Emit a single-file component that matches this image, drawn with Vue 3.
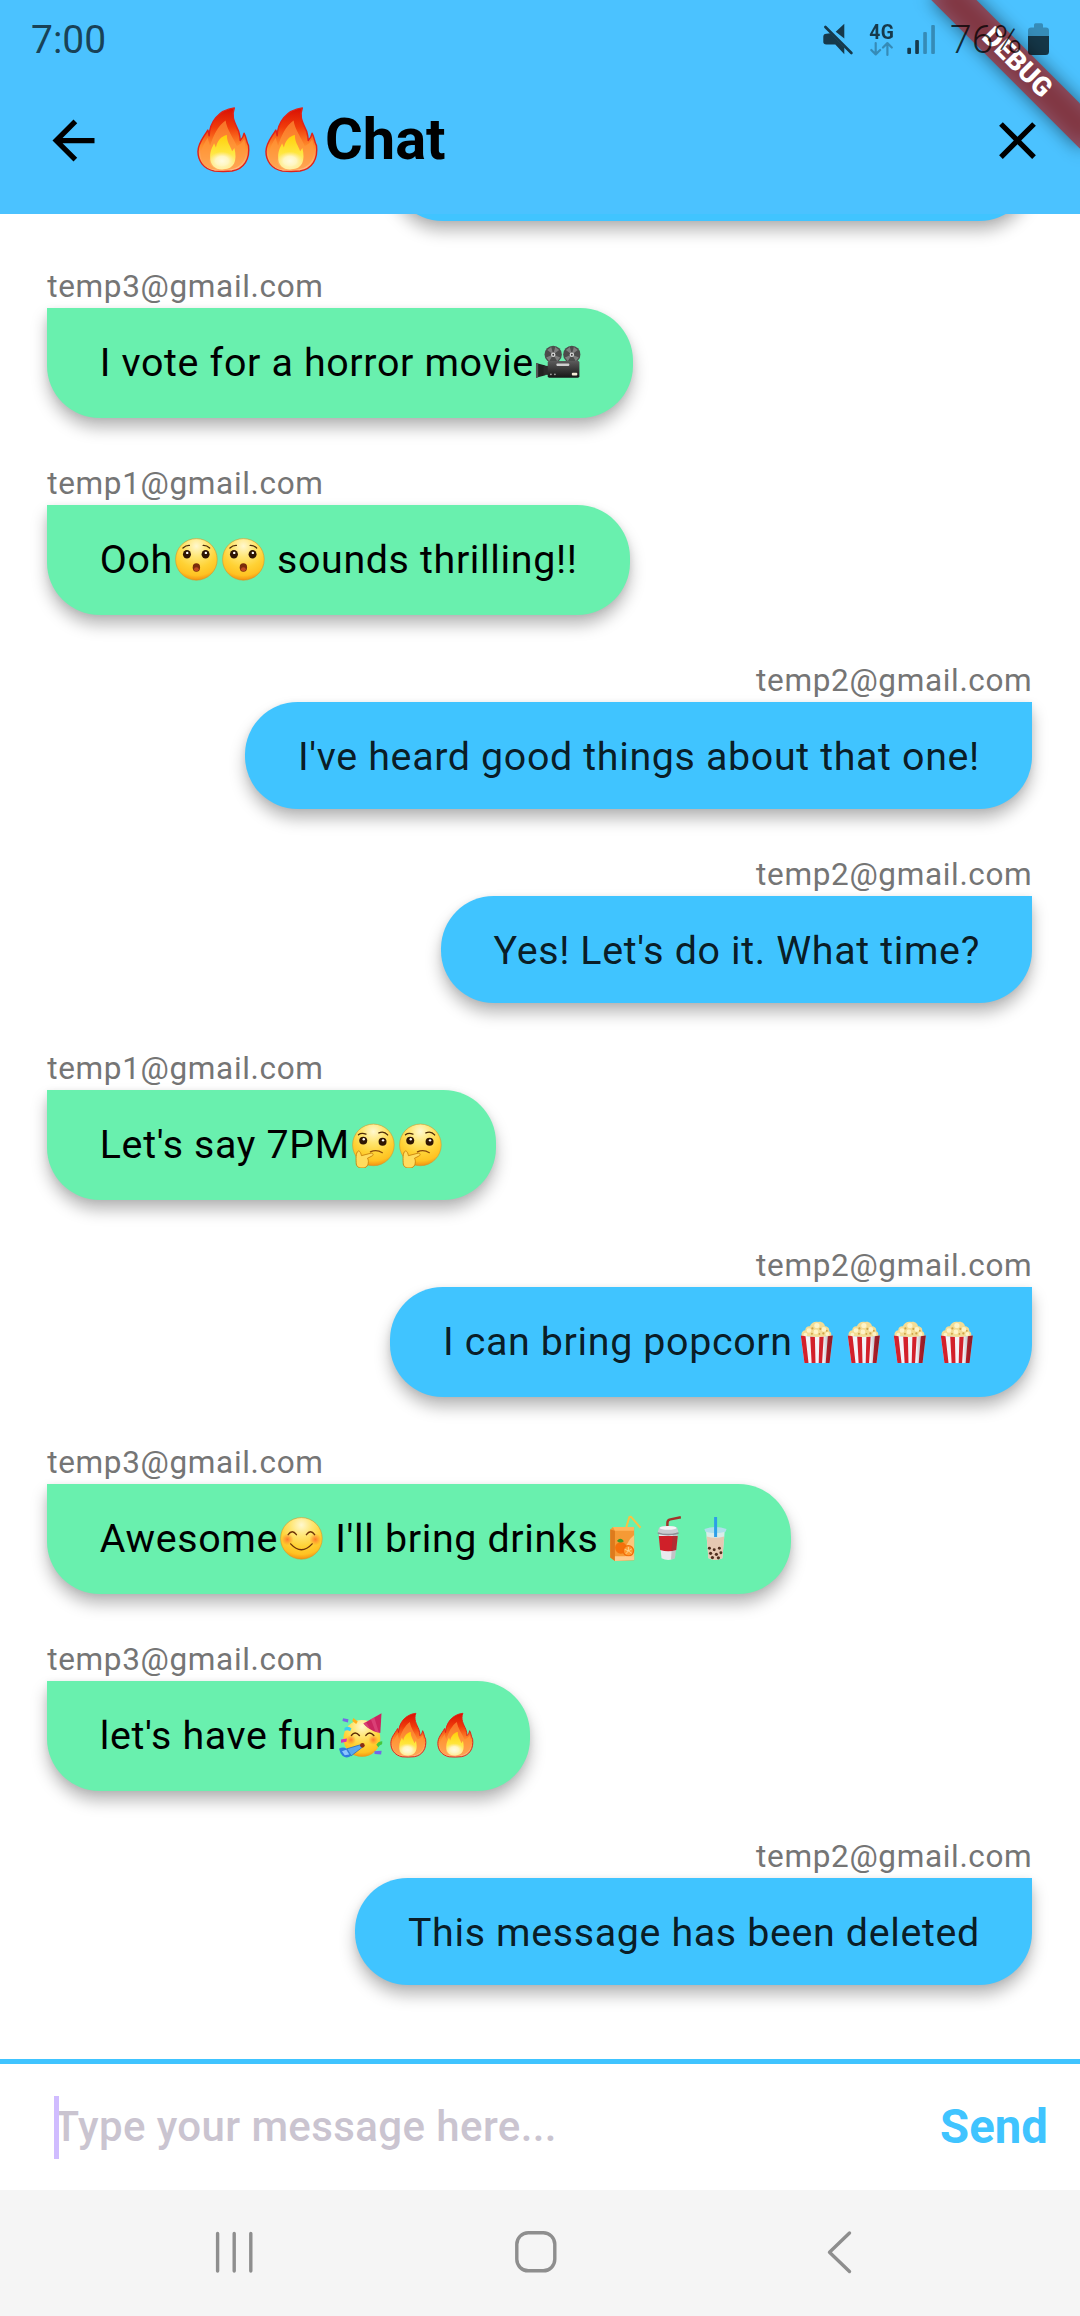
<script setup>
const messages = [
  { from: 'temp3@gmail.com', parts: ['I vote for a horror movie', { e: 'camera' }] },
  { from: 'temp1@gmail.com', parts: ['Ooh', { e: 'wow' }, { e: 'wow' }, ' sounds thrilling!!'] },
  { from: 'temp2@gmail.com', mine: true, plain: true, parts: ["I've heard good things about that one!"] },
  { from: 'temp2@gmail.com', mine: true, plain: true, parts: ["Yes! Let's do it. What time?"] },
  { from: 'temp1@gmail.com', parts: ["Let's say 7PM", { e: 'think' }, { e: 'think' }] },
  {
    from: 'temp2@gmail.com',
    mine: true,
    parts: ['I can bring popcorn', { e: 'popcorn' }, { e: 'popcorn' }, { e: 'popcorn' }, { e: 'popcorn' }],
  },
  {
    from: 'temp3@gmail.com',
    parts: ['Awesome', { e: 'smile' }, " I'll bring drinks", { e: 'juice' }, { e: 'cup' }, { e: 'boba' }],
  },
  { from: 'temp3@gmail.com', parts: ["let's have fun", { e: 'party' }, { e: 'fire' }, { e: 'fire' }] },
  { from: 'temp2@gmail.com', mine: true, plain: true, parts: ['This message has been deleted'] },
]
</script>

<template>
  <div class="phone">
    <svg class="sprites" width="0" height="0" aria-hidden="true">
      <defs>
        <radialGradient id="gFace" cx="50%" cy="18%" r="86%">
          <stop offset="0" stop-color="#fff8cf" />
          <stop offset=".3" stop-color="#ffe674" />
          <stop offset=".6" stop-color="#ffd235" />
          <stop offset=".82" stop-color="#ffc222" />
          <stop offset=".93" stop-color="#f59a14" />
          <stop offset="1" stop-color="#e07c08" />
        </radialGradient>
        <linearGradient id="gFire" x1="0" y1="0" x2="0" y2="1">
          <stop offset="0" stop-color="#d81004" />
          <stop offset=".3" stop-color="#f03a0a" />
          <stop offset=".6" stop-color="#ff8d2c" />
          <stop offset="1" stop-color="#ffc08a" />
        </linearGradient>
        <linearGradient id="gFlame" x1="0" y1="0" x2="0" y2="1">
          <stop offset="0" stop-color="#ffcf0a" />
          <stop offset=".5" stop-color="#ffe63c" />
          <stop offset="1" stop-color="#fff3a8" />
        </linearGradient>
        <radialGradient id="gGlow">
          <stop offset="0" stop-color="#fffbe0" />
          <stop offset=".5" stop-color="#fff6c0" />
          <stop offset="1" stop-color="#ffe9a0" stop-opacity="0" />
        </radialGradient>
        <radialGradient id="gBlush">
          <stop offset="0" stop-color="#ff6a2a" stop-opacity=".85" />
          <stop offset="1" stop-color="#ff7a2a" stop-opacity="0" />
        </radialGradient>
        <linearGradient id="gCam" x1="0" y1="0" x2="0" y2="1">
          <stop offset="0" stop-color="#5c5c5c" />
          <stop offset=".5" stop-color="#383838" />
          <stop offset="1" stop-color="#161616" />
        </linearGradient>
        <linearGradient id="gBag" x1="0" y1="0" x2="1" y2="0">
          <stop offset="0" stop-color="#000" stop-opacity="0" />
          <stop offset=".7" stop-color="#000" stop-opacity="0" />
          <stop offset="1" stop-color="#223" stop-opacity=".45" />
        </linearGradient>
      </defs>

      <symbol id="fire" viewBox="0 0 47 47">
        <path d="M18.200 45C10.500 43.300 6.900 37.800 6.900 31.500c0-5.800 3.500-9.200 6.800-14.900.5 1.500.8 2.600.9 4C15 11.500 20.700 2.700 32 1.300c-2.400 6.200.5 10.400 3 16.200.7 2.500 1.100 4.300 1.100 6.300 1.500-1.500 2.400-3 2.700-5 1.800 3.600 1.200 4.800 3 8.600 1.200 9.300-3.100 16-11.300 17.500-4.200.5-8.100.4-12.300.1z" fill="url(#gFire)" stroke="#e0231a" stroke-width="1" stroke-linejoin="round" />
        <path d="M9 35c-.2-5.400 2.300-9.300 4.600-13l1.700 5.600c2-6.800 5.300-13.900 10.700-17.600.8 6 5.300 12 7.800 17.600 2.100-.8 4-2.700 5-4.600 2.300 8.500 2.600 20.300-12.800 21.200C16 44.300 9.500 43 9 35z" fill="#ff9a3c" opacity=".65" />
        <path d="M15.300 35c0-4.500 2-7.300 2.700-9.300l1.300 3c1-4.800 3.800-7.900 7.600-8.600-.3 4.500 2.500 7.700 3.600 11.200l1.600-2.300c2.100 9.100-.2 14.400-7.800 14.800-5.600.2-9-3-9-8.800z" fill="url(#gFlame)" />
        <ellipse cx="23.500" cy="38" rx="9" ry="6.500" fill="url(#gGlow)" />
      </symbol>

      <symbol id="wow" viewBox="0 0 47 47">
        <circle cx="23.500" cy="23.500" r="20.900" fill="url(#gFace)" stroke="#d9942b" stroke-width=".6" />
        <ellipse cx="14" cy="18.400" rx="4" ry="4.300" fill="#2e1503" />
        <ellipse cx="32.700" cy="18.400" rx="4" ry="4.300" fill="#2e1503" />
        <circle cx="14.300" cy="17" r="1.200" fill="#fff" />
        <circle cx="33" cy="17" r="1.200" fill="#fff" />
        <path d="M10 12q3-2.800 6.500-2.600M30.300 9.400q3.500-.2 6.500 2.600" fill="none" stroke="#4e2c07" stroke-width="1.300" stroke-linecap="round" />
        <ellipse cx="23.500" cy="31.600" rx="3.700" ry="4.200" fill="#7a2d0b" />
        <ellipse cx="23.500" cy="33.300" rx="2.400" ry="2" fill="#c04a20" />
      </symbol>

      <symbol id="think" viewBox="0 0 47 47">
        <circle cx="23.500" cy="23" r="20.900" fill="url(#gFace)" stroke="#d9942b" stroke-width=".6" />
        <circle cx="13.300" cy="18.700" r="4" fill="#2e1503" />
        <circle cx="32.700" cy="19.800" r="4" fill="#2e1503" />
        <circle cx="13.800" cy="17.300" r="1.200" fill="#fff" />
        <circle cx="33.200" cy="18.400" r="1.200" fill="#fff" />
        <path d="M8.500 12.800q3-2.300 7.500-.6M29 11q5-2.500 8.800 2" fill="none" stroke="#4e2c07" stroke-width="1.300" stroke-linecap="round" />
        <path d="M20.500 30q6-3 12 .8" fill="none" stroke="#8a4a0a" stroke-width="1.200" stroke-linecap="round" />
        <path d="M8.300 29.200c1.600-.6 2.700 2.300 3.200 4.600l9.700-2.500c2.300-.3 2.700 2 .8 2.900l-4.500 2.300c1.600 1.500 1.500 8.300-2.700 9.400-3.600.8-8 .2-8.500-3.700-.3-3.800-.8-11.800 2-13z" fill="#ffdc5e" stroke="#c9820c" stroke-width=".9" />
      </symbol>

      <symbol id="smile" viewBox="0 0 47 47">
        <circle cx="23.500" cy="23.500" r="20.900" fill="url(#gFace)" stroke="#d9942b" stroke-width=".6" />
        <circle cx="9.500" cy="24.500" r="6" fill="url(#gBlush)" />
        <circle cx="37.500" cy="24.500" r="6" fill="url(#gBlush)" />
        <path d="M10.200 19.800q4-6 8.300 0M28.500 19.800q4.200-6 8.300 0M12.700 29q10.800 11.800 21.600 0" fill="none" stroke="#6e3408" stroke-width="1.400" stroke-linecap="round" />
      </symbol>

      <symbol id="party" viewBox="0 0 47 47">
        <circle cx="25" cy="26.500" r="18.500" fill="url(#gFace)" />
        <circle cx="14" cy="28" r="5" fill="url(#gBlush)" />
        <circle cx="36.500" cy="28" r="5" fill="url(#gBlush)" />
        <path d="M14.500 23.500q3.500-5 8 0M29 23.500q3.500-5 8 0" fill="none" stroke="#5e2c06" stroke-width="1.500" stroke-linecap="round" />
        <path d="M26.500 11.500L44.700 1.200 43.500 21c-5.500-.6-12.500-4-17-9.500z" fill="#cc2560" />
        <path d="M34 7.200l3.400-1.900 4.700 15.400-3.500-1zM29.200 10l4 6.800-3-1.700-3.600-3.700z" fill="#e85a8c" opacity=".5" />
        <path d="M24.800 32.500l-15 4.500 4.500 7L26 35z" fill="#5aa8f0" stroke="#1f61b8" stroke-width=".7" />
        <path d="M2 37q4-2.500 7.800 0l4.500 7q-4.700 3.500-8.800 0Q3 41.500 2 37z" fill="#2f7be0" />
        <path d="M5 39.500l4.300-1.600 3 4.800-4.500.8z" fill="#8bc6ff" />
        <circle cx="25.500" cy="33.500" r="2.300" fill="#8a2b12" />
        <path d="M6 6.300l5.500 1-.5 3.200-5.500-1.500z" fill="#7468e8" />
        <path d="M16.500 6l4.300 3.500-1.500 2.500-4-3z" fill="#ffb11a" />
        <path d="M7.500 16q4-2.500 7 .5l-1.300 2.800q-3-2-5.700-.3z" fill="#3bcdf0" />
        <path d="M4 27.500l6-1-.5 3.300-5.500 1z" fill="#d336b4" />
        <path d="M39.500 33q2-3.500 6-3.500l-.2 3q-2.500.5-3.800 3z" fill="#45c83c" />
        <path d="M37.500 39.500l7.300-.7-.5 4-6.500-.5z" fill="#7468e8" />
      </symbol>

      <symbol id="camera" viewBox="0 0 47 47">
        <path d="M2 24l9.500 2.500v10L2 39z" fill="#222" />
        <path d="M2 24l2.200.6v13.800L2 39z" fill="#555" />
        <rect x="9.500" y="27" width="5" height="9" fill="#2b2b2b" />
        <circle cx="19.300" cy="15.500" r="8.700" fill="#4c4c4c" />
        <circle cx="38" cy="15.500" r="8.700" fill="#4c4c4c" />
        <g fill="#7d7d7d">
          <path d="M19.300 15.500l-6-4.500 4-3zM19.300 15.500l6-4.500-4-3zM19.300 15.500l-7 3 3 3.800zM19.300 15.500l7 3-3 3.800zM38 15.500l-6-4.500 4-3zM38 15.500l6-4.500-4-3zM38 15.500l-7 3 3 3.800zM38 15.500l7 3-3 3.800z" />
        </g>
        <circle cx="19.300" cy="15.800" r="2.200" fill="#d8d8d8" />
        <circle cx="38" cy="15.800" r="2.200" fill="#d8d8d8" />
        <circle cx="19.300" cy="15.800" r=".9" fill="#333" />
        <circle cx="38" cy="15.800" r=".9" fill="#333" />
        <rect x="13.800" y="22" width="31.800" height="17" rx="1.500" fill="url(#gCam)" />
        <rect x="22.500" y="24.500" width="13" height="2.500" rx=".8" fill="#cfcfcf" />
        <rect x="38" y="34" width="5.500" height="2.700" rx="1" fill="#f4ecd8" />
        <circle cx="17" cy="35.500" r=".9" fill="#aaa" />
        <circle cx="21" cy="35.500" r=".9" fill="#aaa" />
      </symbol>

      <symbol id="popcorn" viewBox="0 0 47 47">
        <path d="M9.300 17.500c-2-3 .5-6.300 3-6.300 0-3 2.600-4.200 4.700-3.800C18 3.700 22 2 25.300 3c3.500-1 6.500 1.600 6.800 4.200 3 0 4.800 2.500 4.300 5 2.500 1 2.700 4.300 1 6.300z" fill="#f3dc94" />
        <g fill="#fdf3c8">
          <circle cx="16" cy="11.500" r="2.300" /><circle cx="24" cy="6.500" r="2.600" /><circle cx="31" cy="10.500" r="2.400" />
          <circle cx="23" cy="13" r="2.400" /><circle cx="34.500" cy="15" r="2" /><circle cx="12.500" cy="15.500" r="1.800" />
        </g>
        <g fill="#cfa449">
          <circle cx="19.500" cy="9.500" r="1.100" /><circle cx="27.500" cy="10" r="1.100" /><circle cx="19" cy="14.800" r="1" />
          <circle cx="30.500" cy="14.500" r="1.100" /><circle cx="26.500" cy="15" r=".9" /><circle cx="34" cy="11.800" r=".9" />
        </g>
        <path d="M7.800 16.500q16.200 3 32.200 0L36.700 44.200H11.500z" fill="#f4f3f8" />
        <path d="M7.800 16.500l4.800.8 3 26.900h-4.100zM17.300 17.900l4.700.3.600 26h-3.900zM26.500 18.200l4.300-.3-1.600 26.300h-3.400zM35 17.400l5-.9-3.300 27.700h-3.900z" fill="#d3202b" />
        <path d="M7.800 16.500q16.200 3 32.200 0L36.700 44.200H11.500z" fill="url(#gBag)" />
      </symbol>

      <symbol id="juice" viewBox="0 0 47 47">
        <path d="M27 13.500L30.500 2l1.700-.2 9.500 11" fill="none" stroke="#f6c445" stroke-width="2" stroke-linejoin="round" />
        <path d="M11.300 14.500L14 12h21.300v33.500l-19.300.8-4.700-3.500z" fill="#f59a35" />
        <path d="M11.300 14.500l4.700 1.200v30.600l-4.700-3.500z" fill="#dd7a1d" />
        <path d="M14 12h21.300l-.3 3.700H16z" fill="#ffb65c" />
        <path d="M35.300 20v22H26q-1-14 9.300-22z" fill="#fbc77b" />
        <circle cx="22" cy="33" r="5.800" fill="#f4700a" />
        <circle cx="29.500" cy="36" r="5.200" fill="#ff9a2e" stroke="#f26c0b" stroke-width="1.300" />
        <path d="M29.500 36v-4M29.500 36l3.500-2M29.500 36l3.500 2.500M29.500 36l-2.500 3M29.500 36l-3.700-1.500" stroke="#ffdca0" stroke-width=".8" />
        <path d="M18 26q3.500-4.500 7 .3-3.500 3-7-.3z" fill="#3e9a24" />
        <path d="M16 41.500h19.300v3.700l-19.300 1z" fill="#ffc98d" />
      </symbol>

      <symbol id="cup" viewBox="0 0 47 47">
        <path d="M22.500 13V8q0-3 3-3.600L36 2.200" fill="none" stroke="#a3332a" stroke-width="2.500" />
        <path d="M14 18h18.700l-2.600 25.500q-6.700 3.500-13.500 0z" fill="#e9e9ee" />
        <path d="M13.800 21h19.100l-1.500 14.200q-8 2.600-16.200 0z" fill="#cf2029" />
        <path d="M28 18h4.700l-2.600 25.500-4 1.300z" fill="#555" opacity=".25" />
        <path d="M14.200 12.500q9-2.700 18 0l1.500 5q-10.200 3-20.900 0z" fill="#c9cbd0" />
        <ellipse cx="23.200" cy="13" rx="8.300" ry="1.900" fill="#f5f5f7" />
        <path d="M12.800 17.200q10.500 3.200 20.900 0v2q-10.400 3-20.900 0z" fill="#8e9096" />
      </symbol>

      <symbol id="boba" viewBox="0 0 47 47">
        <path d="M14 14.500q9.500-3.500 19 0l-2.500 29q-7 3.500-14 0z" fill="#d9ece9" />
        <path d="M14.700 21.500q8.800 2.600 17.700 0l-1.900 22q-7 3.500-14 0z" fill="#e6c8b2" />
        <path d="M12.500 14q11-4 22.200 0l-1 2.800q-10.200 3-20.300 0z" fill="#aee0ea" />
        <path d="M22.200 2h3v20h-3z" fill="#2c9fe8" />
        <g fill="#51301f">
          <circle cx="17.500" cy="33.500" r="1.500" /><circle cx="22.300" cy="35" r="1.500" /><circle cx="27.500" cy="33.500" r="1.500" />
          <circle cx="18.700" cy="38.500" r="1.600" /><circle cx="24.500" cy="39.500" r="1.600" /><circle cx="29" cy="38" r="1.500" />
          <circle cx="20.500" cy="42.800" r="1.600" /><circle cx="26.500" cy="43" r="1.600" />
        </g>
      </symbol>
    </svg>

    <header class="app-bar">
      <div class="status">
        <span class="clock">7:00</span>
        <div class="status-right">
          <svg width="120" height="40" viewBox="820 20 120 40" fill="#000">
            <g opacity=".7">
              <path d="M835.700 31.700l8.600-7.900v14.700zM826.300 33.700l4-.4 14 14.300v6.700l-9-9.800h-9q-3-.3-3-2.500v-5.500q0-2.500 3-2.800z" />
              <path d="M825.400 27l26 26" stroke="#000" stroke-width="2.700" stroke-linecap="round" />
              <text x="869.300" y="38.500" font-family="Roboto, sans-serif" font-size="19.300" font-weight="700" textLength="24.700">4G</text>
              <rect x="907.300" y="47.700" width="3.700" height="6.300" rx="1" />
              <rect x="915.200" y="40" width="3.700" height="14" rx="1" />
            </g>
            <g opacity=".28">
              <rect x="923.200" y="32" width="3.700" height="22" rx="1" />
              <rect x="931.200" y="25" width="3.700" height="29" rx="1" />
              <path d="M875.700 43v11M871.300 50l4.400 4.400 4.400-4.400M887.400 55V43.500M883 47.500l4.400-4.400 4.400 4.400" fill="none" stroke="#000" stroke-width="2.200" stroke-linecap="round" stroke-linejoin="round" />
            </g>
          </svg>
          <span class="percent">76%</span>
          <svg class="battery" width="21" height="33" viewBox="0 0 21 33">
            <path d="M0 13V7.500Q0 4.500 3 4.500H6V2Q6 .3 7.500.3h6Q15 .3 15 2v2.500h3q3 0 3 3V13z" opacity=".28" />
            <path d="M0 13h21v15.500q0 3.500-3.500 3.500h-14Q0 32 0 28.500z" opacity=".72" />
          </svg>
        </div>
      </div>
      <div class="toolbar">
        <svg class="back" width="63" height="63" viewBox="0 0 24 24"><path d="M20 11H7.830l5.590-5.590L12 4l-8 8 8 8 1.410-1.410L7.830 13H20v-2z" /></svg>
        <h1 class="title">
          <svg class="title-emoji"><use href="#fire" /></svg><svg class="title-emoji"><use href="#fire" /></svg><span>Chat</span>
        </h1>
        <svg class="close" width="63" height="63" viewBox="0 0 24 24"><path d="M19 6.410L17.590 5 12 10.590 6.410 5 5 6.410 10.590 12 5 17.590 6.410 19 12 13.410 17.590 19 19 17.590 13.410 12z" /></svg>
      </div>
    </header>

    <main class="list">
      <div class="row mine"><div class="bubble scrolled"></div></div>
      <div v-for="(m, i) in messages" :key="i" class="row" :class="{ mine: m.mine }">
        <div class="from">{{ m.from }}</div>
        <div class="bubble" :class="{ plain: m.plain }">
          <template v-for="(p, j) in m.parts" :key="j">
            <svg v-if="p.e" class="emoji"><use :href="'#' + p.e" /></svg>
            <span v-else>{{ p }}</span>
          </template>
        </div>
      </div>
    </main>

    <footer class="composer">
      <div class="field"><i class="caret"></i>Type your message here...</div>
      <button class="send">Send</button>
    </footer>

    <nav class="nav">
      <svg width="1080" height="126" viewBox="0 0 1080 126" fill="none" stroke="#8e8e8e" stroke-width="3.400" stroke-linecap="round" stroke-linejoin="round">
        <path d="M217.600 43.500v37.500M234.200 43.500v37.500M250.800 43.500v37.500" />
        <rect x="516.800" y="42.800" width="38" height="38" rx="11.500" />
        <path d="M849.500 43L829.500 62.200l20 19.300" />
      </svg>
    </nav>

    <div class="banner"><span>DEBUG</span></div>
  </div>
</template>

<style>
body {
  margin: 0;
  background: #fff;
}
</style>

<style scoped>
.phone {
  position: relative;
  display: flex;
  flex-direction: column;
  width: 1080px;
  height: 2316px;
  overflow: hidden;
  background: #fff;
  color: #000;
  font-family: Roboto, 'Noto Sans', sans-serif;
}
.sprites {
  position: absolute;
}
.app-bar {
  flex: none;
  display: flex;
  flex-direction: column;
  height: 214px;
  background: #4bc2ff;
}
.status {
  position: relative;
  z-index: 3;
  display: flex;
  justify-content: space-between;
  height: 67px;
  padding: 0 31px 0 31px;
  color: rgba(0, 0, 0, 0.68);
}
.clock,
.percent {
  font-size: 39px;
  line-height: 46px;
  padding-top: 17px;
}
.percent {
  font-weight: 300;
  width: 78px;
  margin-left: 10px;
  white-space: nowrap;
  color: rgba(0, 0, 0, 0.75);
}
.status-right {
  display: flex;
}
.status-right svg {
  margin-top: 20px;
}
.status-right .battery {
  margin-top: 23px;
}
.toolbar {
  display: flex;
  align-items: center;
  height: 147px;
  padding: 0 31.500px 0 42px;
}
.title {
  flex: 1;
  display: flex;
  align-items: center;
  margin: 0 0 0 82.500px;
  font-size: 57.750px;
  line-height: 68px;
  font-weight: 700;
}
.title-emoji {
  width: 68px;
  height: 68px;
  margin-top: -1.500px;
}
.title span {
  margin: -2.500px 0 0 1.500px;
}
.list {
  flex: none;
  box-sizing: border-box;
  display: flex;
  flex-direction: column;
  justify-content: flex-end;
  gap: 43.600px;
  height: 1844.700px;
  padding: 0 47.600px 73.600px 47.250px;
  overflow: hidden;
}
.row {
  flex: none;
  display: flex;
  flex-direction: column;
  align-items: flex-start;
}
.row.mine {
  align-items: flex-end;
}
.from {
  height: 43px;
  font-size: 31.500px;
  line-height: 43px;
  letter-spacing: 0.656px;
  color: #757575;
}
.bubble {
  box-sizing: border-box;
  height: 110.300px;
  padding: 0 52.500px;
  border-radius: 0 52.500px 52.500px 52.500px;
  background: #69f0ae;
  box-shadow: 0 10px 16px rgba(0, 0, 0, 0.27), 0 1px 6px rgba(0, 0, 0, 0.07);
  font-size: 39.375px;
  line-height: 109.300px;
  letter-spacing: 0.656px;
  white-space: nowrap;
}
.bubble span {
  white-space: pre;
}
.bubble.plain {
  height: 107.600px;
}
.mine .bubble {
  border-radius: 52.500px 0 52.500px 52.500px;
  background: #40c4ff;
  color: rgba(0, 0, 0, 0.87);
}
.bubble.scrolled {
  width: 642.750px;
  border-radius: 52.500px;
}
.emoji {
  width: 46.800px;
  height: 46.800px;
  vertical-align: -10.500px;
}
.composer {
  flex: none;
  box-sizing: border-box;
  display: flex;
  align-items: center;
  justify-content: space-between;
  height: 131px;
  padding: 0 32.200px 0 53.500px;
  border-top: 5.250px solid #40c4ff;
}
.field {
  position: relative;
  font-size: 42px;
  line-height: 63px;
  font-weight: 500;
  letter-spacing: 0.400px;
  color: #cac4d0;
}
.caret {
  position: absolute;
  left: 0;
  top: 1px;
  width: 5.250px;
  height: 63px;
  background: #d0bcff;
}
.send {
  border: 0;
  padding: 0;
  background: none;
  color: #40c4ff;
  font: 700 47.250px/56px Roboto, sans-serif;
}
.nav {
  flex: none;
  height: 126.300px;
  background: #f5f5f5;
}
.nav svg {
  display: block;
}
.banner {
  position: absolute;
  z-index: 2;
  left: 911.900px;
  top: 47.400px;
  width: 210px;
  height: 31.500px;
  transform: rotate(45deg);
  color: #fff;
  font-size: 26.800px;
  line-height: 31.500px;
  font-weight: 900;
  text-align: center;
}
.banner::before {
  content: '';
  position: absolute;
  inset: 0;
  background: rgba(0, 0, 0, 0.5);
  filter: blur(9px);
}
.banner span {
  position: absolute;
  inset: 0;
  background: rgba(183, 28, 28, 0.627);
}
</style>
